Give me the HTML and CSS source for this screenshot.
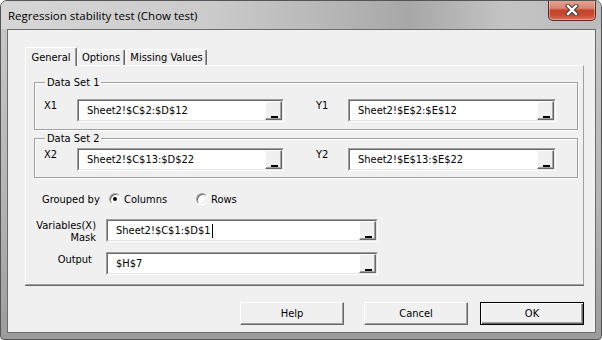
FILE: index.html
```html
<!DOCTYPE html>
<html lang="en">
<head>
    <meta charset="UTF-8">
    <title>Regression stability test (Chow test)</title>
    <link rel="stylesheet" href="styles.css">
</head>
<body>
    <div class="window">
        <div class="titlebar">
            <span class="title">Regression stability test (Chow test)</span>
            <div class="close-btn">
                <svg width="14" height="12" viewBox="0 0 14 12">
                    <path d="M3 2 L11 10 M11 2 L3 10" stroke="#3a3a3a" stroke-width="4.4" stroke-linecap="square" fill="none"/>
                    <path d="M3 2 L11 10 M11 2 L3 10" stroke="#ffffff" stroke-width="2.4" stroke-linecap="square" fill="none"/>
                </svg>
            </div>
        </div>

        <div class="client">
            <div class="tabs">
                <div class="tab tab-active tab-general">General</div>
                <div class="tab tab-options">Options</div>
                <div class="tab tab-missing">Missing Values</div>
            </div>

            <div class="panel">
                <div class="group group-first">
                    <span class="group-title">Data Set 1</span>
                    <div class="pair-row">
                        <span class="field-label">X1</span>
                        <div class="refedit ref-x">
                            <div class="refedit-inner">
                                <span class="ref-text">Sheet2!$C$2:$D$12</span>
                                <span class="ref-btn"><span class="ref-bar"></span></span>
                            </div>
                        </div>
                        <span class="field-label label-y">Y1</span>
                        <div class="refedit ref-y">
                            <div class="refedit-inner">
                                <span class="ref-text">Sheet2!$E$2:$E$12</span>
                                <span class="ref-btn"><span class="ref-bar"></span></span>
                            </div>
                        </div>
                    </div>
                </div>

                <div class="group group-second">
                    <span class="group-title">Data Set 2</span>
                    <div class="pair-row">
                        <span class="field-label">X2</span>
                        <div class="refedit ref-x">
                            <div class="refedit-inner">
                                <span class="ref-text">Sheet2!$C$13:$D$22</span>
                                <span class="ref-btn"><span class="ref-bar"></span></span>
                            </div>
                        </div>
                        <span class="field-label label-y">Y2</span>
                        <div class="refedit ref-y">
                            <div class="refedit-inner">
                                <span class="ref-text">Sheet2!$E$13:$E$22</span>
                                <span class="ref-btn"><span class="ref-bar"></span></span>
                            </div>
                        </div>
                    </div>
                </div>

                <div class="grouped-row">
                    <span class="grouped-label">Grouped by</span>
                    <span class="radio-option">
                        <span class="radio"><span class="radio-dot"></span></span>
                        Columns
                    </span>
                    <span class="radio-option">
                        <span class="radio"></span>
                        Rows
                    </span>
                </div>

                <div class="side-row side-row-vars">
                    <span class="side-label">Variables(X)<br>Mask</span>
                    <div class="refedit ref-wide">
                        <div class="refedit-inner">
                            <span class="ref-text">Sheet2!$C$1:$D$1<span class="caret"></span></span>
                            <span class="ref-btn"><span class="ref-bar"></span></span>
                        </div>
                    </div>
                </div>

                <div class="side-row side-row-output">
                    <span class="side-label label-output">Output</span>
                    <div class="refedit ref-wide">
                        <div class="refedit-inner">
                            <span class="ref-text">$H$7</span>
                            <span class="ref-btn"><span class="ref-bar"></span></span>
                        </div>
                    </div>
                </div>
            </div>

            <div class="buttons">
                <div class="btn btn-help">Help</div>
                <div class="btn btn-cancel">Cancel</div>
                <div class="btn btn-default">OK</div>
            </div>
        </div>
    </div>
</body>
</html>
```

FILE: styles.css
```css
* {
    box-sizing: border-box;
}
body {
    margin: 0;
    width: 602px;
    height: 340px;
    overflow: hidden;
    background-color: #ffffff;
    font-family: "DejaVu Sans Condensed", "Liberation Sans", sans-serif;
    font-size: 11px;
    color: #000000;
}
.window {
    width: 602px;
    height: 340px;
    display: flex;
    flex-direction: column;
    border: 1px solid #555555;
    border-radius: 7px 7px 4px 4px;
    background: linear-gradient(to bottom, #c9c9c9 0%, #b4b4b4 60%, #9c9c9c 100%);
    overflow: hidden;
}
.titlebar {
    height: 28px;
    flex: none;
    display: flex;
    justify-content: space-between;
    align-items: flex-start;
    padding-left: 7px;
    background: linear-gradient(to right, #d6d6d6 0%, #cbcbcb 35%, #b3b3b3 58%, #a7a7a7 68%, #c4c4c4 84%, #bababa 100%);
}
.title {
    align-self: center;
    margin-top: 1px;
    font-family: "Open Sans", "Liberation Sans", sans-serif;
    font-size: 11.5px;
    color: #000000;
}
.close-btn {
    width: 48px;
    height: 21px;
    margin-top: -1px;
    margin-right: 5px;
    display: flex;
    align-items: center;
    justify-content: center;
    border: 1px solid #5b2a20;
    border-top: none;
    border-radius: 0 0 5px 5px;
    background: linear-gradient(to bottom, #e6a597 0%, #d98573 40%, #c3442c 52%, #c94a30 75%, #d9735a 100%);
    box-shadow: inset 0 0 0 1px rgba(255, 255, 255, 0.35);
}
.client {
    flex: none;
    height: 304px;
    margin: 0 5px 6px 6px;
    border: 1px solid #6b6b6b;
    background-color: #f0f0f0;
}

/* tab strip */
.tabs {
    display: flex;
    align-items: flex-start;
    height: 18px;
    margin-top: 17px;
    margin-left: 17px;
}
.tab {
    height: 16px;
    margin-top: 2px;
    display: flex;
    align-items: center;
    justify-content: center;
    border-top: 1px solid #ffffff;
    border-left: 1px solid #ffffff;
    border-right: 1px solid #696969;
    border-radius: 2px 2px 0 0;
    box-shadow: inset -1px 0 0 #a0a0a0;
    background-color: #f0f0f0;
}
.tab-active {
    height: 19px;
    margin-top: 0;
    position: relative;
    z-index: 1;
}
.tab-general {
    width: 52px;
}
.tab-options {
    width: 48px;
}
.tab-missing {
    width: 81px;
    margin-left: 1px;
}
.panel {
    width: 559px;
    height: 220px;
    margin-left: 17px;
    border-top: 1px solid #ffffff;
    border-left: 1px solid #ffffff;
    border-right: 1px solid #a0a0a0;
    border-bottom: 1px solid #a0a0a0;
    box-shadow: 0 1px 0 #696969;
}

/* group boxes */
.group {
    position: relative;
    width: 544px;
    margin-left: 8px;
    border: 1px solid #a0a0a0;
    box-shadow: 1px 1px 0 #ffffff, inset 1px 1px 0 #ffffff;
    padding-left: 9px;
}
.group-first {
    height: 48px;
    margin-top: 16px;
    padding-top: 16px;
}
.group-second {
    height: 40px;
    margin-top: 8px;
    padding-top: 9px;
}
.group-title {
    position: absolute;
    top: -7px;
    left: 10px;
    padding: 0 2px;
    line-height: 13px;
    background-color: #f0f0f0;
}
.pair-row {
    display: flex;
    align-items: flex-start;
}
.field-label {
    width: 33px;
    line-height: 13px;
}
.label-y {
    width: 32px;
    margin-left: 32px;
}

/* reference edit boxes */
.refedit {
    height: 23px;
    display: flex;
    border: 1px solid;
    border-color: #a0a0a0 #ffffff #ffffff #a0a0a0;
}
.ref-x {
    width: 207px;
}
.ref-y {
    width: 208px;
}
.ref-wide {
    width: 272px;
}
.refedit-inner {
    flex: 1;
    display: flex;
    align-items: center;
    border: 1px solid;
    border-color: #696969 #e3e3e3 #e3e3e3 #696969;
    background-color: #ffffff;
}
.ref-text {
    flex: 1;
    display: flex;
    align-items: center;
    padding-left: 8px;
    line-height: 13px;
}
.caret {
    width: 1px;
    height: 14px;
    margin-left: 1px;
    background-color: #000000;
}
.ref-btn {
    width: 17px;
    height: 19px;
    display: flex;
    align-items: flex-end;
    justify-content: center;
    padding-bottom: 1px;
    padding-left: 1px;
    border: 1px solid;
    border-color: #ffffff #696969 #696969 #ffffff;
    box-shadow: inset -1px -1px 0 #a0a0a0;
    background-color: #f0f0f0;
}
.ref-bar {
    width: 7px;
    height: 2px;
    background-color: #000000;
}

/* grouped by */
.grouped-row {
    display: flex;
    align-items: center;
    height: 14px;
    margin-top: 14px;
    padding-left: 16px;
}
.grouped-label {
    width: 67px;
}
.radio-option {
    width: 87px;
    display: flex;
    align-items: center;
}
.radio {
    width: 12px;
    height: 12px;
    margin-right: 3px;
    display: flex;
    align-items: center;
    justify-content: center;
    border-radius: 50%;
    border: 1px solid;
    border-color: #a0a0a0 #ffffff #ffffff #a0a0a0;
    box-shadow: inset 1px 1px 0 #696969, inset -1px -1px 0 #e3e3e3;
    background-color: #ffffff;
}
.radio-dot {
    width: 4px;
    height: 4px;
    border-radius: 50%;
    background-color: #000000;
}

/* side labelled rows */
.side-row {
    display: flex;
    align-items: flex-start;
}
.side-row-vars {
    margin-top: 13px;
}
.side-row-output {
    margin-top: 8px;
}
.side-label {
    width: 70px;
    margin-right: 10px;
    padding-top: 1px;
    text-align: right;
    line-height: 12px;
}
.label-output {
    padding-right: 4px;
    line-height: 13px;
}

/* dialog buttons */
.buttons {
    display: flex;
    justify-content: flex-end;
    margin-top: 17px;
    padding-right: 11px;
}
.btn {
    width: 104px;
    height: 23px;
    display: flex;
    align-items: center;
    justify-content: center;
    border: 1px solid;
    border-color: #ffffff #696969 #696969 #ffffff;
    box-shadow: inset -1px -1px 0 #a0a0a0;
    background-color: #f0f0f0;
}
.btn-help {
    margin-right: 20px;
}
.btn-cancel {
    margin-right: 12px;
}
.btn-default {
    border: 1px solid #000000;
    box-shadow: inset 1px 1px 0 #ffffff, inset -1px -1px 0 #696969, inset -2px -2px 0 #a0a0a0;
}
```
